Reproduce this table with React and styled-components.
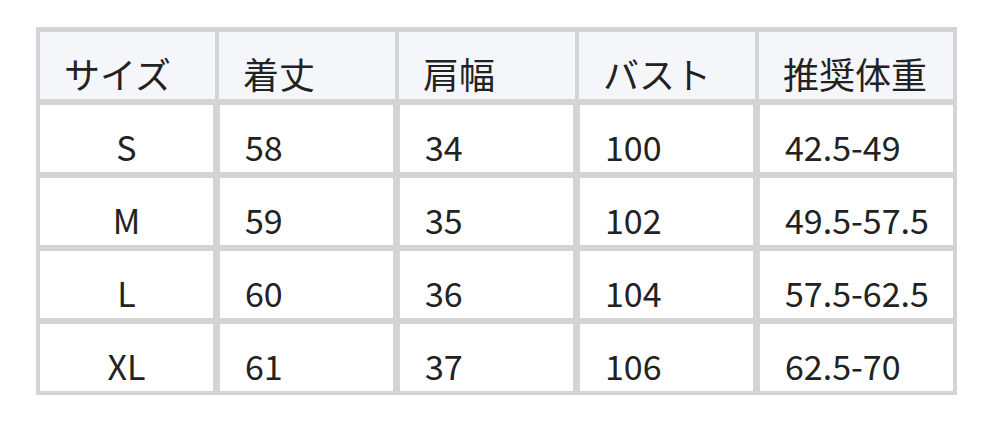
import React from "react";
import styled, {createGlobalStyle} from "styled-components";

const rows = [
  {size: "S", length: "58", shoulder: "34", bust: "100", weight: "42.5-49"},
  {size: "M", length: "59", shoulder: "35", bust: "102", weight: "49.5-57.5"},
  {size: "L", length: "60", shoulder: "36", bust: "104", weight: "57.5-62.5"},
  {size: "XL", length: "61", shoulder: "37", bust: "106", weight: "62.5-70"},
];

const headers = ["サイズ", "着丈", "肩幅", "バスト", "推奨体重"];

const App = () => {
  return (
    <>
      <GlobalStyle />
      <Page>
        <SizeTable>
          {headers.map((h) => (
            <HeadCell key={h}>{h}</HeadCell>
          ))}
          {rows.map((row) => (
            <React.Fragment key={row.size}>
              <Cell $center>{row.size}</Cell>
              <Cell>{row.length}</Cell>
              <Cell>{row.shoulder}</Cell>
              <Cell>{row.bust}</Cell>
              <Cell>{row.weight}</Cell>
            </React.Fragment>
          ))}
        </SizeTable>
      </Page>
    </>
  );
};

export default App;

const GlobalStyle = createGlobalStyle`
  html, body {
    margin: 0;
    background: #fff;
  }
  body {
    font-family: "Noto Sans CJK JP", "Noto Sans", sans-serif;
    color: #222;
  }
`

const Page = styled.div`
  padding: 27px 0 0 36px;
`

const SizeTable = styled.div`
  display: grid;
  width: 921px;
  box-sizing: border-box;
  grid-template-columns: 173px 173px 173px 173px 193px;
  grid-auto-rows: 67px;
  column-gap: 7px;
  row-gap: 6px;
  padding: 5px 4px 4px 4px;
  background: #d4d4d4;
`

const BaseCell = styled.div`
  display: flex;
  align-items: flex-end;
  padding: 0 0 1px 25px;
  font-size: 34px;
  line-height: normal;
  color: #222;
`

const HeadCell = styled(BaseCell)`
  background: #f5f6fa;
  padding-left: 24px;
  font-size: 36px;
  padding-bottom: 0;

  &:not(:nth-child(5)) {
    margin-right: -2px;
  }
  &:not(:first-child) {
    margin-left: -1px;
  }
`

const Cell = styled(BaseCell)`
  background: #fff;
  justify-content: ${(p) => (p.$center ? "center" : "flex-start")};
  padding-left: ${(p) => (p.$center ? "0" : "25px")};
`
